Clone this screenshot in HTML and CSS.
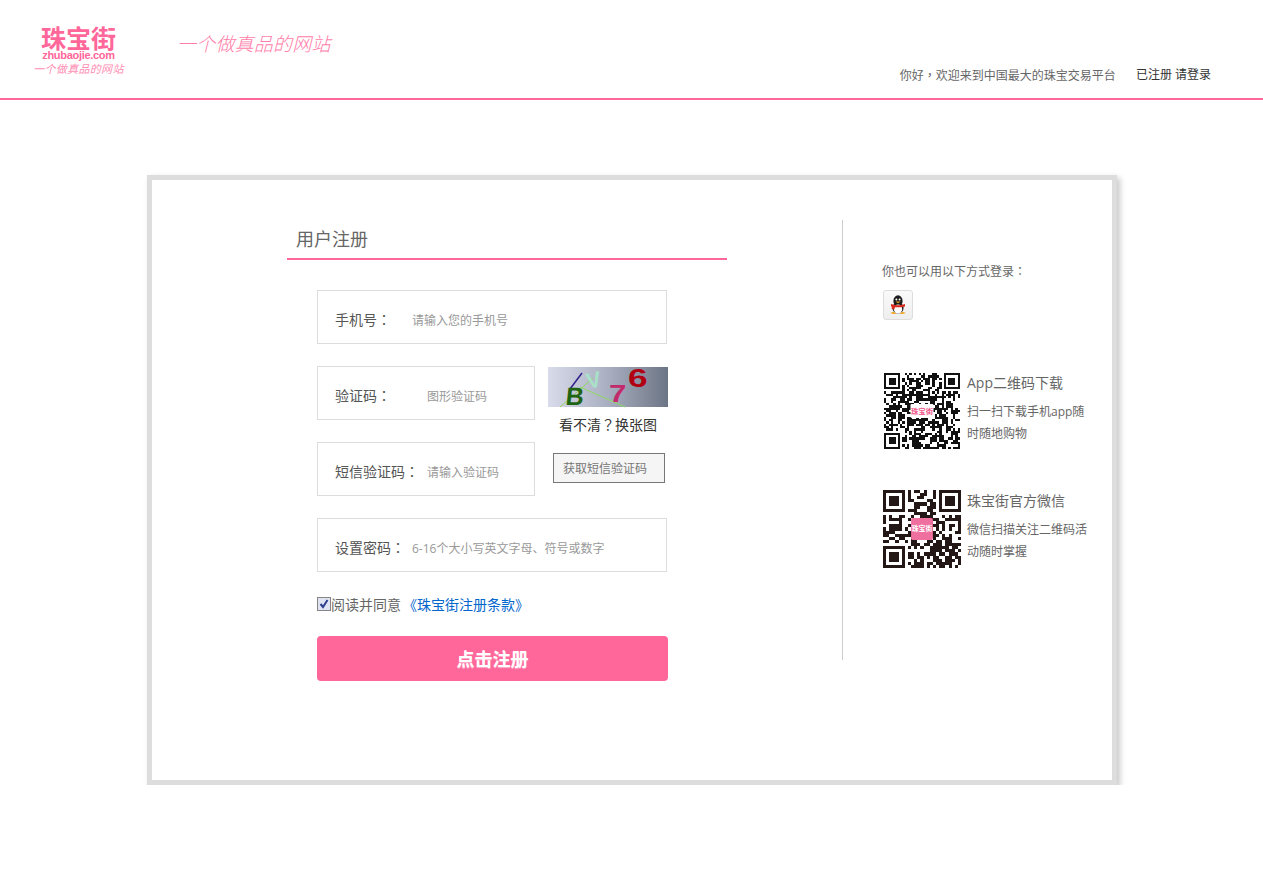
FILE: index.html
```html
<!DOCTYPE html>
<html lang="zh-CN">
<head>
  <meta charset="UTF-8" />
  <meta name="viewport" content="width=device-width, initial-scale=1.0">
  <title>用户注册 | 珠宝街</title>
  <link rel="stylesheet" href="styles.css">
</head>
<body>
  <header class="site-header">
    <div class="logo">
      <div class="logo-name">珠宝街</div>
      <div class="logo-url">zhubaojie.com</div>
      <div class="logo-slogan">一个做真品的网站</div>
    </div>
    <div class="slogan">一个做真品的网站</div>
    <div class="header-links">
      <span class="welcome">你好<span class="punct" lang="zh-TW">，</span>欢迎来到中国最大的珠宝交易平台</span>
      <a href="#">已注册 请登录</a>
    </div>
  </header>

  <main class="register-card">
    <section class="register-main">
      <h2 class="register-title">用户注册</h2>
      <form class="register-form">
        <label class="field field-wide">
          <span class="field-label">手机号<span class="punct" lang="zh-TW">：</span></span>
          <input type="text" class="input-phone" placeholder="请输入您的手机号" />
        </label>

        <div class="field-row">
          <label class="field field-short">
            <span class="field-label label-code">验证码<span class="punct" lang="zh-TW">：</span></span>
            <input type="text" placeholder="图形验证码" />
          </label>
          <div class="captcha">
            <svg class="captcha-img" width="120" height="40" viewBox="0 0 120 40">
              <defs>
                <linearGradient id="captcha-bg">
                  <stop offset="0" stop-color="#d8dbea" />
                  <stop offset="0.5" stop-color="#a9afc0" />
                  <stop offset="1" stop-color="#6c7585" />
                </linearGradient>
              </defs>
              <rect width="120" height="40" fill="url(#captcha-bg)" />
              <path d="M12 40 L45 11" stroke="#8fd860" stroke-width="1" fill="none" />
              <path d="M32 20 L77 40" stroke="#8fd860" stroke-width="1" fill="none" />
              <path d="M34 6 L22 22" stroke="#33238c" stroke-width="1.5" fill="none" />
              <text x="17" y="38" class="cap-b" transform="skewX(-6) translate(4 0)">B</text>
              <text x="38" y="20" class="cap-v" transform="rotate(-12 48 12)">V</text>
              <text transform="translate(61 35) scale(1.3 1)" class="cap-7">7</text>
              <text transform="translate(80 20) scale(1.35 1)" class="cap-6">6</text>
            </svg>
            <a href="#" class="captcha-link">看不清<span class="punct" lang="zh-TW">？</span>换张图</a>
          </div>
        </div>

        <div class="field-row">
          <label class="field field-short">
            <span class="field-label label-code">短信验证码<span class="punct" lang="zh-TW">：</span></span>
            <input type="text" placeholder="请输入验证码" />
          </label>
          <button type="button" class="sms-btn">获取短信验证码</button>
        </div>

        <label class="field field-wide">
          <span class="field-label label-pass">设置密码<span class="punct" lang="zh-TW">：</span></span>
          <input type="password" placeholder="6-16个大小写英文字母、符号或数字" />
        </label>

        <div class="agree">
          <svg class="agree-check" width="14" height="14" viewBox="0 0 14 14">
            <rect x="0.5" y="0.5" width="13" height="13" fill="#dfe3f2" stroke="#858585" />
            <path d="M3.5 7 L6 10 L10.5 3" fill="none" stroke="#2f3f8f" stroke-width="2" />
          </svg>
          <span>阅读并同意</span>
          <a href="#" class="agree-link">《珠宝街注册条款》</a>
        </div>

        <button type="submit" class="submit-btn">点击注册</button>
      </form>
    </section>

    <aside class="register-side">
      <p class="side-tip">你也可以用以下方式登录<span class="punct" lang="zh-TW">：</span></p>
      <a href="#" class="qq-btn" aria-label="QQ">
        <svg width="16" height="20" viewBox="0 0 16 20">
          <ellipse cx="8" cy="6" rx="4.6" ry="5.8" fill="#1c1c1c" />
          <ellipse cx="8" cy="13" rx="5.6" ry="5.5" fill="#1c1c1c" />
          <ellipse cx="8" cy="14" rx="4.2" ry="4.5" fill="#fff" />
          <circle cx="6.4" cy="4.4" r="1" fill="#fff" />
          <circle cx="9.6" cy="4.4" r="1" fill="#fff" />
          <path d="M5.5 6.6 H10.5 L8 8.2 Z" fill="#f2a51e" />
          <path d="M1 9 Q8 11.5 15 9 L15 11.4 Q8 13.2 1 11.4 Z M2 11 L5 11.5 L4.4 14.6 L1.6 13.8 Z" fill="#d8281c" />
          <path d="M0.5 18 Q3.5 15.5 6.5 18.6 Q3.5 19.8 0.5 18 Z M9.5 18.6 Q12.5 15.5 15.5 18 Q12.5 19.8 9.5 18.6 Z" fill="#f2a51e" />
        </svg>
      </a>

      <div class="qr-block qr-app">
        <svg class="qr" data-size="33" data-seed="17" data-color="#111" width="76" height="76"></svg>
        <div class="qr-text">
          <h3>App二维码下载</h3>
          <p>扫一扫下载手机app随时随地购物</p>
        </div>
      </div>

      <div class="qr-block qr-wechat">
        <svg class="qr" data-size="25" data-seed="91" data-color="#231815" width="78" height="78"></svg>
        <div class="qr-text">
          <h3>珠宝街官方微信</h3>
          <p>微信扫描关注二维码活动随时掌握</p>
        </div>
      </div>
    </aside>
  </main>

  <script src="qr.js"></script>
</body>
</html>
```

FILE: styles.css
```css
:root {
  --pink: #ff6699;
  --text-color: #666;
  --border-color: #ddd;
}

body {
  margin: 0;
  font-family: 'Open Sans', 'Noto Sans CJK SC', Arial, sans-serif;
  font-size: 12px;
  color: var(--text-color);
  background: #fff;
}

a {
  text-decoration: none;
  color: inherit;
}

/* full-width punctuation sits centred in its cell on the original */
.punct {
  font-family: 'Noto Sans CJK TC', sans-serif;
}

/* header */
.site-header {
  display: flex;
  height: 98px;
  border-bottom: 2px solid var(--pink);
}

.logo {
  width: 91px;
  margin: 26px 0 0 33px;
  text-align: center;
  color: var(--pink);
}

.logo-name {
  font-size: 25px;
  line-height: 24px;
  font-weight: bold;
}

.logo-url {
  font-family: 'Liberation Sans', sans-serif;
  font-size: 11px;
  line-height: 10px;
  font-weight: bold;
  letter-spacing: -0.3px;
}

.logo-slogan {
  margin-top: 2px;
  font-size: 11px;
  line-height: 14px;
  letter-spacing: 0.3px;
  font-style: italic;
  white-space: nowrap;
  opacity: 0.75;
}

.slogan {
  margin: 31px 0 0 53px;
  width: 154px;
  font-size: 19px;
  line-height: 26px;
  letter-spacing: 0.2px;
  font-style: italic;
  font-weight: 300;
  white-space: nowrap;
  color: var(--pink);
  opacity: 0.85;
}

.header-links {
  margin: 0 52px 13px auto;
  align-self: flex-end;
  display: flex;
  gap: 20px;
  line-height: 18px;
}

.header-links a {
  color: #333;
}

/* card */
.register-card {
  display: flex;
  box-sizing: border-box;
  width: 970px;
  height: 610px;
  margin: 75px 0 0 147px;
  padding: 40px 0 0 135px;
  border: 5px solid var(--border-color);
  box-shadow: 3px 3px 6px rgba(0, 0, 0, 0.22);
  background: #fff;
}

.register-main {
  flex: none;
  width: 440px;
}

.register-title {
  box-sizing: border-box;
  height: 40px;
  margin: 0;
  padding-left: 9px;
  font-size: 18px;
  font-weight: normal;
  line-height: 38px;
  border-bottom: 2px solid var(--pink);
}

.register-form {
  display: flex;
  flex-direction: column;
  align-items: flex-start;
  margin: 30px 0 0 30px;
  gap: 22px;
}

.field {
  display: flex;
  align-items: center;
  box-sizing: border-box;
  height: 54px;
  padding: 6px 0 0 17px;
  border: 1px solid var(--border-color);
}

.field-wide {
  width: 350px;
}

.field-short {
  width: 218px;
}

.field-label {
  flex: none;
  width: 77px;
  margin-bottom: 2px;
  font-size: 14px;
  color: #555;
  white-space: nowrap;
}

.label-code {
  width: 92px;
}

.field input {
  flex: 1;
  min-width: 0;
  padding: 0;
  border: none;
  outline: none;
  font: inherit;
  font-size: 12px;
  color: #333;
}

.field input::placeholder {
  color: #999;
  opacity: 1;
}

.field-row {
  display: flex;
  gap: 13px;
  height: 54px;
  width: 351px;
}

.captcha {
  width: 120px;
  padding-top: 1px;
  text-align: center;
}

.captcha-img {
  display: block;
  overflow: visible;
}

.cap-b {
  font: bold 25px 'Liberation Sans', sans-serif;
  fill: #1f6410;
}

.cap-v {
  font: bold 22px 'Liberation Sans', sans-serif;
  fill: #a8e0c8;
}

.cap-7 {
  font: bold 24px 'Liberation Sans', sans-serif;
  fill: #c22a6c;
}

.cap-6 {
  font: bold 26px 'Liberation Sans', sans-serif;
  fill: #b00012;
}

.captcha-link {
  display: block;
  margin-top: 8px;
  font-size: 14px;
  line-height: 18px;
  color: #333;
  white-space: nowrap;
}

.sms-btn {
  flex: none;
  width: 112px;
  height: 30px;
  margin: 11px 0 0 5px;
  padding: 0 8px 0 0;
  border: 1px solid #777;
  background: #f5f5f5;
  font: inherit;
  font-size: 12px;
  color: #777;
  cursor: pointer;
}

.agree {
  display: flex;
  align-items: center;
  height: 18px;
  margin-top: 1px;
  font-size: 14px;
  white-space: nowrap;
}

.agree-check {
  flex: none;
}

.agree-link {
  margin-left: 2px;
  color: #0066cc;
}

.submit-btn {
  width: 351px;
  height: 45px;
  margin-top: 1px;
  padding: 0 0 2px;
  border: none;
  border-radius: 4px;
  background: var(--pink);
  font: inherit;
  font-size: 18px;
  font-weight: bold;
  color: #fff;
  text-shadow: 0 1px 1px rgba(255, 255, 255, 0.5);
  cursor: pointer;
}

/* right column */
.register-side {
  flex: none;
  box-sizing: border-box;
  width: 270px;
  height: 440px;
  margin-left: 115px;
  padding: 41px 0 0 39px;
  border-left: 1px solid #ccc;
}

.side-tip {
  margin: 0;
  line-height: 20px;
}

.qq-btn {
  display: flex;
  align-items: center;
  justify-content: center;
  box-sizing: border-box;
  width: 30px;
  height: 30px;
  margin: 8px 0 0 1px;
  border: 1px solid #ddd;
  border-radius: 3px;
  background: linear-gradient(#fafafa, #eee);
}

.qr-block {
  display: flex;
}

.qr {
  flex: none;
  display: block;
}

.qr-app {
  margin: 53px 0 0 2px;
  gap: 7px;
}

.qr-wechat {
  margin: 41px 0 0 1px;
  gap: 6px;
}

.qr-wechat .qr-text {
  padding-top: 1px;
}

.qr-text {
  width: 121px;
}

.qr-text h3 {
  margin: 0;
  font-size: 14px;
  font-weight: normal;
  line-height: 20px;
}

.qr-text p {
  margin: 8px 0 0;
  line-height: 22px;
}
```

FILE: qr.js
```js
// Draws the two QR codes: finder squares plus seeded noise, logo tile in the middle
document.querySelectorAll('.qr').forEach((svg) => {
  const size = Number(svg.dataset.size);
  const color = svg.dataset.color;
  let seed = Number(svg.dataset.seed) * 2654435761;

  function next() {
    seed ^= seed << 13;
    seed ^= seed >>> 17;
    seed ^= seed << 5;
    return (seed >>> 0) / 4294967296;
  }

  function inFinder(x, y) {
    const nearLeft = x < 8;
    const nearRight = x >= size - 8;
    const nearTop = y < 8;
    const nearBottom = y >= size - 8;
    return (nearLeft && nearTop) || (nearRight && nearTop) || (nearLeft && nearBottom);
  }

  function finder(ox, oy) {
    return `M${ox} ${oy}h7v7h-7z M${ox + 1} ${oy + 1}v5h5v-5z M${ox + 2} ${oy + 2}h3v3h-3z `;
  }

  let d = finder(0, 0) + finder(size - 7, 0) + finder(0, size - 7);

  for (let y = 0; y < size; y++) {
    for (let x = 0; x < size; x++) {
      if (!inFinder(x, y) && next() > 0.45) {
        d += `M${x} ${y}h1v1h-1z `;
      }
    }
  }

  // logo tile: white with pink name on the app code, pink with white name on the wechat code
  const isWechat = size === 25;
  const tile = isWechat ? 7 : 10;
  const tileH = isWechat ? 7 : 6;
  const startX = (size - tile) / 2;
  const startY = (size - tileH) / 2;
  const fontSize = isWechat ? 2.2 : 3.2;

  svg.setAttribute('viewBox', `0 0 ${size} ${size}`);
  svg.innerHTML = `
    <rect width="${size}" height="${size}" fill="#fff" />
    <path d="${d}" fill="${color}" fill-rule="evenodd" shape-rendering="crispEdges" />
    <rect x="${startX}" y="${startY}" width="${tile}" height="${tileH}" rx="0.5" fill="${isWechat ? '#ef6f9e' : '#fff'}" />
    <text x="${size / 2}" y="${size / 2 + fontSize * 0.35}" text-anchor="middle"
      font-size="${fontSize}" font-weight="bold" font-family="Noto Sans CJK SC, sans-serif"
      fill="${isWechat ? '#fff' : '#f0558c'}">珠宝街</text>
  `;
});
```
